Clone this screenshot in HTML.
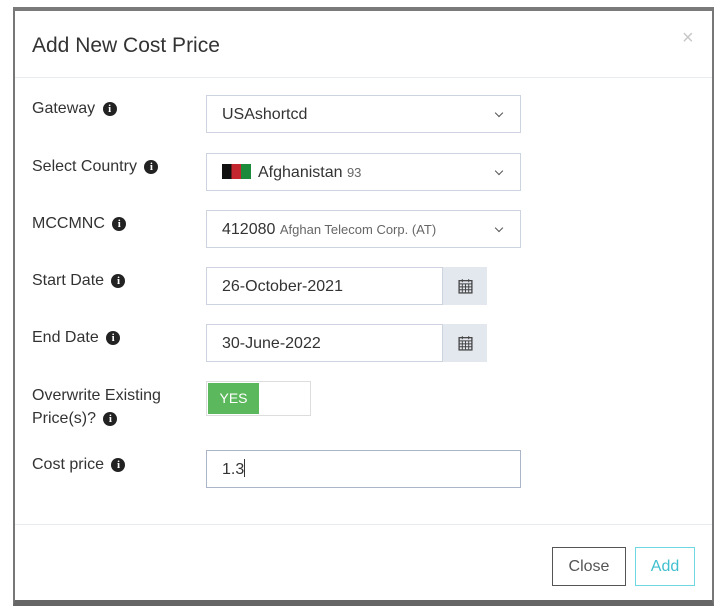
<!DOCTYPE html>
<html><head><style>
*{box-sizing:border-box;margin:0;padding:0}
body{width:722px;height:612px;background:#fff;position:relative;font-family:"Liberation Sans",sans-serif;color:#333;overflow:hidden}
.dlg{position:absolute;left:13px;top:7px;width:701px;height:599px;border-left:2px solid #777;border-right:2px solid #777;border-top:4px solid #7a7a7a;border-bottom:6px solid #666;background:#fff}
.abs{position:absolute}
.title{left:17px;top:23px;font-size:21px;color:#333}
.x{left:667px;top:16px;font-size:20px;color:#c8c8c8}
.hr{left:0;width:697px;height:1px;background:#e9ecef}
.lbl{left:17px;font-size:16px;color:#333;line-height:23px}
.inp{left:191px;width:315px;height:38px;border:1px solid #cdd4e0;font-size:16px;padding-left:15px;line-height:38px;color:#333}
.sel::after{content:"";position:absolute;right:18px;top:14px;width:5px;height:5px;border-right:1.3px solid #555;border-bottom:1.3px solid #555;transform:rotate(45deg)}
.cal{position:absolute;right:-1px;top:-1px;width:45px;height:38px;background:#e3e7ee;border-left:1px solid #cdd4e0}
.cal svg{position:absolute;left:15px;top:11px}
.i{display:inline-block;width:14px;height:14px;border-radius:50%;background:#222;color:#fff;font:bold 11px "Liberation Serif",serif;text-align:center;line-height:14px;vertical-align:1px;margin-left:3px}
.small{font-size:13px;color:#666}
.btn{height:39px;font-size:16px;line-height:37px;text-align:center;top:536px}
</style></head><body>
<div class="dlg">
<div class="abs title">Add New Cost Price</div>
<div class="abs x">×</div>
<div class="abs hr" style="top:66px"></div>

<div class="abs lbl" style="top:86px">Gateway <span class="i">i</span></div>
<div class="abs inp sel" style="top:84px">USAshortcd</div>

<div class="abs lbl" style="top:144px">Select Country <span class="i">i</span></div>
<div class="abs inp sel" style="top:142px"><span style="display:inline-block;width:29px;height:15px;vertical-align:-2px;background:linear-gradient(90deg,#111 0 33%,#c3262f 33% 66%,#1b8a3a 66%);margin-right:7px"></span>Afghanistan <span class="small">93</span></div>

<div class="abs lbl" style="top:201px">MCCMNC <span class="i">i</span></div>
<div class="abs inp sel" style="top:199px">412080 <span class="small">Afghan Telecom Corp. (AT)</span></div>

<div class="abs lbl" style="top:258px">Start Date <span class="i">i</span></div>
<div class="abs inp" style="top:256px;width:281px">26-October-2021<div class="cal"><svg width="15" height="16" viewBox="0 0 14 15"><rect x="1" y="2.5" width="12" height="11.5" fill="none" stroke="#444" stroke-width="1.2"/><path d="M1 5.5h12M4 1v3M10 1v3M1 8.3h12M1 11h12M4 5.5v8M7 5.5v8M10 5.5v8" stroke="#444" stroke-width="0.9"/></svg></div></div>

<div class="abs lbl" style="top:315px">End Date <span class="i">i</span></div>
<div class="abs inp" style="top:313px;width:281px">30-June-2022<div class="cal"><svg width="15" height="16" viewBox="0 0 14 15"><rect x="1" y="2.5" width="12" height="11.5" fill="none" stroke="#444" stroke-width="1.2"/><path d="M1 5.5h12M4 1v3M10 1v3M1 8.3h12M1 11h12M4 5.5v8M7 5.5v8M10 5.5v8" stroke="#444" stroke-width="0.9"/></svg></div></div>

<div class="abs lbl" style="top:373px">Overwrite Existing<br>Price(s)? <span class="i">i</span></div>
<div class="abs" style="left:191px;top:370px;width:105px;height:35px;border:1px solid #ddd;background:#fff"><div style="position:absolute;left:1px;top:1px;width:51px;height:31px;background:#5cb85c;color:#fff;font-size:14px;line-height:31px;text-align:center">YES</div></div>

<div class="abs lbl" style="top:442px">Cost price <span class="i">i</span></div>
<div class="abs inp" style="top:439px;border-color:#aab6c8">1.3<span style="display:inline-block;width:1px;height:18px;background:#333;vertical-align:-3px"></span></div>

<div class="abs hr" style="top:513px"></div>
<div class="abs btn" style="left:537px;width:74px;border:1px solid #555;color:#555">Close</div>
<div class="abs btn" style="left:620px;width:60px;border:1px solid #6dd8e2;color:#3fbfcf">Add</div>
</div>
</body></html>
